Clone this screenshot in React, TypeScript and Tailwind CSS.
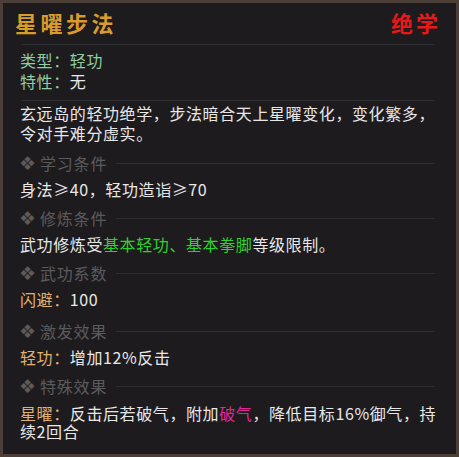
import React from "react";

const font = { fontFamily: '"Noto Sans CJK SC", "Noto Sans", sans-serif' };

function Header({ title, extra = "" }: { title: string; extra?: string }) {
  return (
    <div className={`flex items-center h-[28px] ${extra}`}>
      <span className="text-[19px] text-[#5e5a55] leading-none w-[21px] -ml-[1px]" style={{ fontFamily: '"DejaVu Sans", sans-serif' }}>❖</span>
      <span className="text-[16px] tracking-[0.8px] text-[#5b5b5b] leading-none">{title}</span>
      <div className="ml-[9px] mr-[21px] flex-1 h-px bg-[#2c2e31]" />
    </div>
  );
}

export default function App() {
  return (
    <div
      style={font}
      className="w-[459px] h-[457px] border-[3px] border-[#4b3f38] bg-[#1e1b1f] text-[#e8e8e8] overflow-hidden"
    >
      <div className="h-[38px] flex items-center justify-between pl-[12px] pr-[15px]">
        <span className="text-[22px] font-bold tracking-[3.5px] text-[#d99b2b] leading-none">星曜步法</span>
        <span className="text-[22px] font-bold tracking-[3px] text-[#e61919] leading-none">绝学</span>
      </div>
      <div className="mt-[3px] ml-[19px] w-[413px] h-px bg-[#2c2e31]" />
      <div className="pt-[5px] pl-[17px] text-[16px] tracking-[0.6px]">
        <div className="h-[21px] leading-[21px] text-[#8fcf9f]">类型：轻功</div>
        <div className="h-[21px] leading-[21px]">
          <span className="text-[#8fcf9f]">特性：</span>无
        </div>
      </div>
      <div className="mt-[8px] ml-[19px] w-[413px] h-px bg-[#2c2e31]" />
      <div className="pt-[2px] pl-[17px] text-[16px] tracking-[0.6px] leading-[20px] whitespace-nowrap">
        <div>玄远岛的轻功绝学，步法暗合天上星曜变化，变化繁多，</div>
        <div>令对手难分虚实。</div>
      </div>
      <div className="pl-[17px] text-[16px] tracking-[0.6px] whitespace-nowrap">
        <Header title="学习条件" extra="mt-[6px]" />
        <div className="h-[24px] leading-[24px]">身法≥40，轻功造诣≥70</div>
        <Header title="修炼条件" extra="mt-[3px]" />
        <div className="h-[24px] leading-[24px]">
          武功修炼受<span className="text-[#2ed12e]">基本轻功、基本拳脚</span>等级限制。
        </div>
        <Header title="武功系数" extra="mt-[3px]" />
        <div className="h-[24px] leading-[24px]">
          <span className="text-[#e3b06e]">闪避：</span>100
        </div>
        <Header title="激发效果" extra="mt-[6px]" />
        <div className="h-[24px] leading-[24px]">
          <span className="text-[#e3b06e]">轻功：</span>增加12%反击
        </div>
        <Header title="特殊效果" extra="mt-[3px]" />
        <div className="pt-[4px] leading-[18px]">
          <div>
            <span className="text-[#e3b06e]">星曜：</span>反击后若破气，附加
            <span className="text-[#e0279b]">破气</span>，降低目标16%御气，持
          </div>
          <div>续2回合</div>
        </div>
      </div>
    </div>
  );
}
